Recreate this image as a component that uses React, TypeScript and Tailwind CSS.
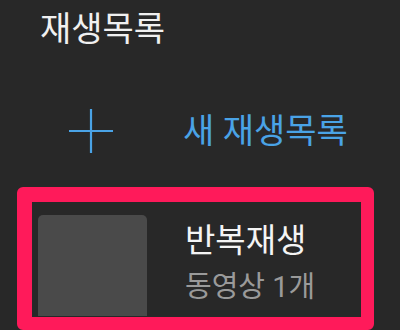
// Playlist picker panel: header, "new playlist" row and a single highlighted playlist.
export default function App() {
  return (
    <div
      className="h-[330px] w-[400px] overflow-hidden bg-[#282828] text-white"
      style={{ fontFamily: 'Roboto, "Noto Sans CJK KR", "Noto Sans", sans-serif' }}
    >
      {/* Header */}
      <h1 className="h-[58px] pl-[40px] text-[34px] leading-[58px] font-normal text-[#f0f0f0]">
        재생목록
      </h1>

      {/* New playlist row */}
      <div className="mt-[50px] flex h-[46px] items-center">
        <div className="flex w-[183px] items-center pl-[69px]">
          <svg width="44" height="44" viewBox="0 0 44 44" className="text-[#4aa3e6]">
            <path d="M22 0v44M0 22h44" stroke="currentColor" strokeWidth="2.2" />
          </svg>
        </div>
        <span className="text-[34px] leading-[46px] text-[#4aa3e6]">새 재생목록</span>
      </div>

      {/* Highlighted playlist */}
      <div className="mt-[33px] ml-[17px] mr-[26px] h-[143px] overflow-hidden rounded-[6px] border-[15px] border-b-[13px] border-r-[13px] border-[#ff1a5a] bg-[#282828]">
        <div className="flex h-full gap-[38px] pl-[6px] pt-[13px]">
          <div className="h-[101px] w-[109px] rounded-t-[5px] bg-[#4a4a4a]" />
          <div className="flex flex-col pt-[4px]">
            <span className="text-[33px] leading-[44px] text-[#f4f4f4]">반복재생</span>
            <span className="mt-[4px] text-[29px] leading-[40px] text-[#9a9a9a]">동영상 1개</span>
          </div>
        </div>
      </div>
    </div>
  );
}
